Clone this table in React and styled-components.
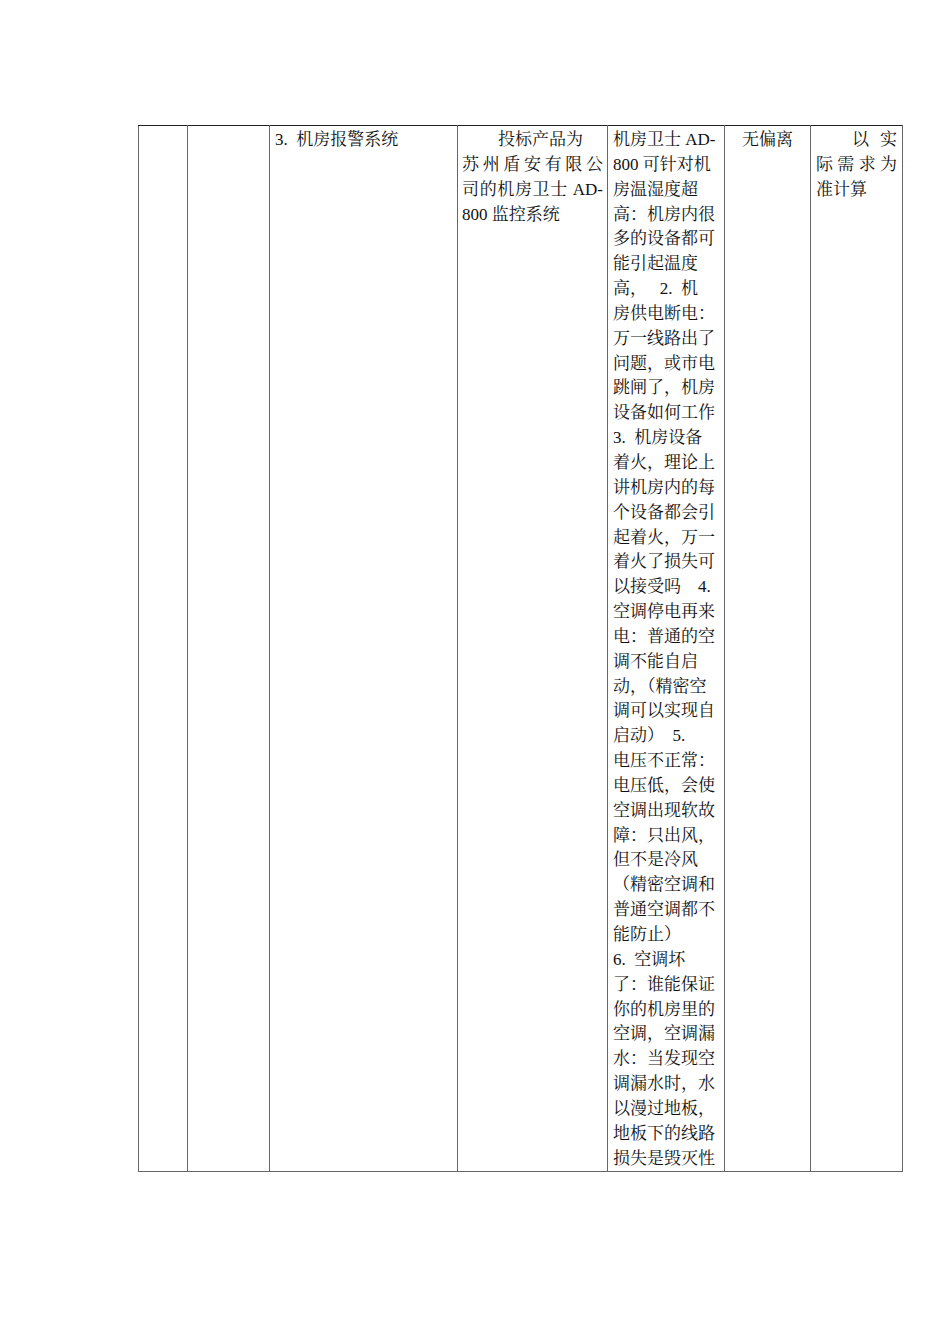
import React from "react";
import styled, { createGlobalStyle } from "styled-components";

const Global = createGlobalStyle`
  html, body { margin: 0; padding: 0; background: #fff; }
  body { font-family: "Liberation Serif", "Noto Serif CJK SC", "Noto Sans CJK SC", serif; color: #111; }
`;

const Page = styled.div`
  width: 950px;
  height: 1344px;
  box-sizing: border-box;
  padding: 125px 0 0 138px;
`;

const Table = styled.table`
  border-collapse: collapse;
  table-layout: fixed;
  width: 764px;
  font-size: 17px;
  line-height: 24.85px;
`;

const Col = styled.col`
  width: ${(p) => p.$w}px;
`;

const Cell = styled.td`
  border: 1px solid #666;
  border-top: 1px solid #222;
  vertical-align: top;
  padding: 2px ${(p) => p.$pad ?? 5}px 0;
  height: 1045px;
  text-align: ${(p) => p.$align || "left"};
  box-sizing: border-box;
`;

const Line = styled.div`
  white-space: pre;
  text-align: ${(p) => (p.$justify ? "justify" : "inherit")};
  text-align-last: ${(p) => (p.$justify ? "justify" : "auto")};
  text-justify: inter-character;
  padding-left: ${(p) => p.$indent || 0}px;
`;

const widths = [49, 82, 188, 150, 117, 86, 92];

const col4 = [
  { t: "投标产品为", indent: 36 },
  { t: "苏州盾安有限公", j: true },
  { t: "司的机房卫士 AD-", j: true },
  { t: "800 监控系统" },
];

const col5 = [
  "机房卫士 AD-",
  "800 可针对机",
  "房温湿度超",
  "高：机房内很",
  "多的设备都可",
  "能引起温度",
  "高，　 2.  机",
  "房供电断电：",
  "万一线路出了",
  "问题，或市电",
  "跳闸了，机房",
  "设备如何工作",
  "3.  机房设备",
  "着火，理论上",
  "讲机房内的每",
  "个设备都会引",
  "起着火，万一",
  "着火了损失可",
  "以接受吗　4.",
  "空调停电再来",
  "电：普通的空",
  "调不能自启",
  "动，（精密空",
  "调可以实现自",
  "启动）　5.",
  "电压不正常：",
  "电压低，会使",
  "空调出现软故",
  "障：只出风，",
  "但不是冷风",
  "（精密空调和",
  "普通空调都不",
  "能防止）",
  "6.  空调坏",
  "了：谁能保证",
  "你的机房里的",
  "空调，空调漏",
  "水：当发现空",
  "调漏水时，水",
  "以漫过地板，",
  "地板下的线路",
  "损失是毁灭性",
];

export default function App() {
  return (
    <>
      <Global />
      <Page>
        <Table>
          <colgroup>
            {widths.map((w, i) => (
              <Col key={i} $w={w} />
            ))}
          </colgroup>
          <tbody>
            <tr>
              <Cell />
              <Cell />
              <Cell>
                <Line>{"3.  机房报警系统"}</Line>
              </Cell>
              <Cell $pad={4}>
                {col4.map((l, i) => (
                  <Line key={i} $justify={l.j} $indent={l.indent}>
                    {l.t}
                  </Line>
                ))}
              </Cell>
              <Cell $pad={5}>
                {col5.map((l, i) => (
                  <Line key={i}>{l}</Line>
                ))}
              </Cell>
              <Cell $align="center">
                <Line>无偏离</Line>
              </Cell>
              <Cell $pad={5}>
                <Line $justify $indent={36}>以实</Line>
                <Line $justify>际需求为</Line>
                <Line>准计算</Line>
              </Cell>
            </tr>
          </tbody>
        </Table>
      </Page>
    </>
  );
}
